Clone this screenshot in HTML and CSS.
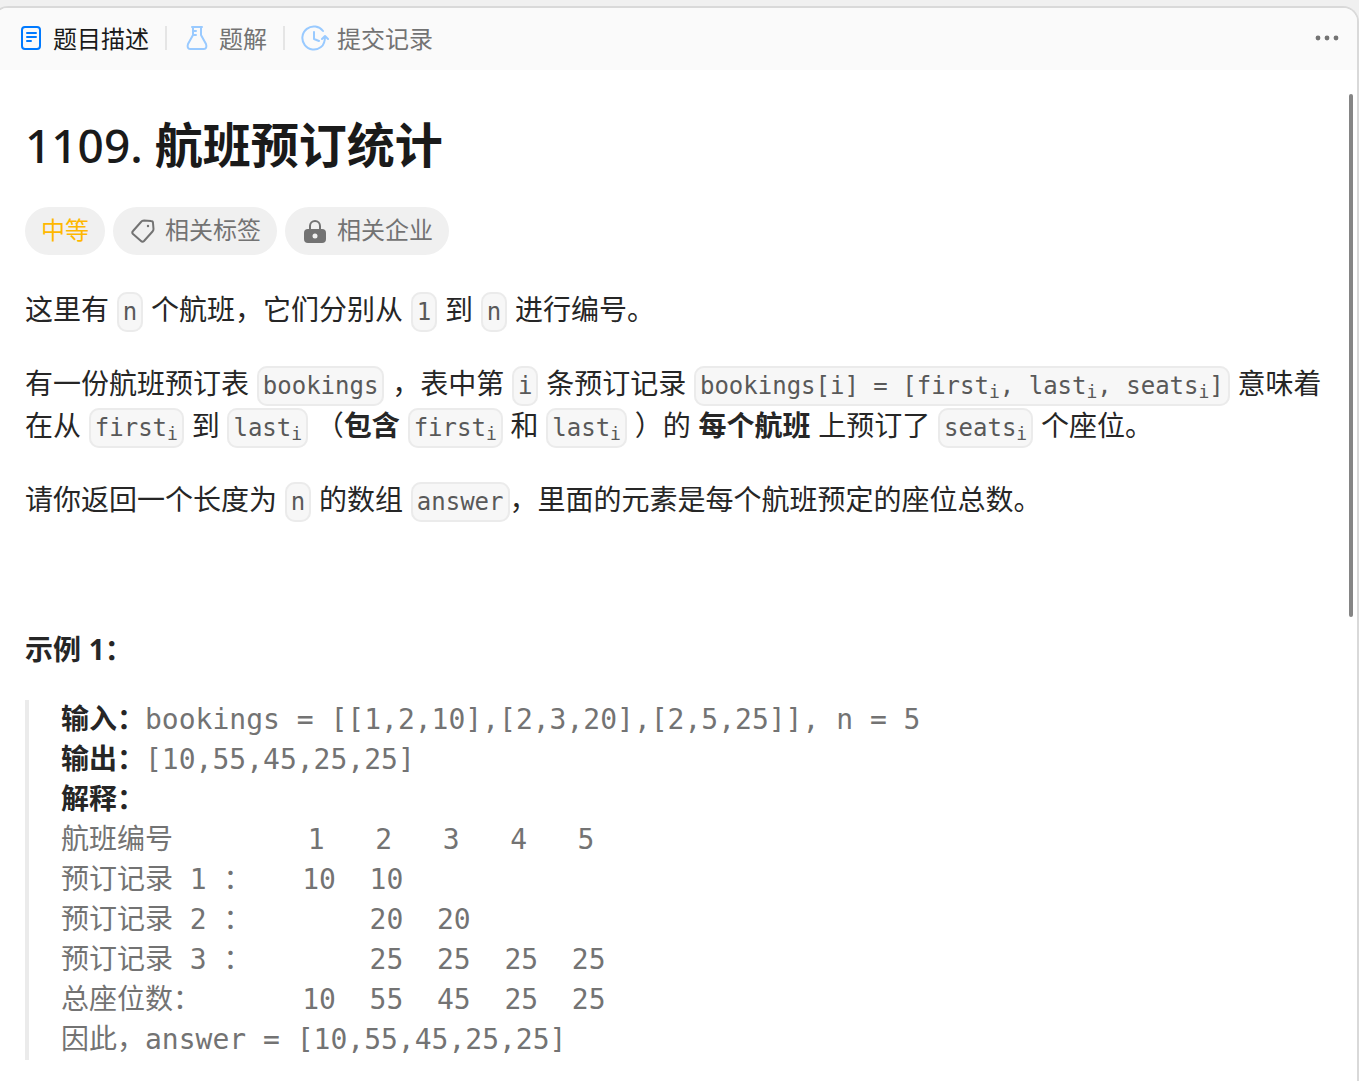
FILE: index.html
```html
<!DOCTYPE html>
<html lang="zh-CN">
<head>
<meta charset="utf-8">
<title>1109. 航班预订统计</title>
<meta name="viewport" content="width=device-width, initial-scale=1">
<link rel="stylesheet" href="styles.css">
</head>
<body>
<main class="panel">
  <header class="bar">
    <nav class="tabs">
      <a class="tab tab-active" href="#description">
        <svg class="icon" viewBox="0 0 28 28" fill="none" stroke="#007aff" stroke-width="2" stroke-linecap="round"><rect x="5" y="3" width="18" height="22" rx="3"/><path d="M10 9h9M10 13h9M10 17h4"/></svg>
        <span class="label">题目描述</span>
      </a>
      <a class="tab" href="#solution">
        <svg class="icon" viewBox="0 0 28 28" fill="none" stroke="#99caff" stroke-width="2" stroke-linecap="round" stroke-linejoin="round"><path d="M9 3h10M10 3v8L5 20c-1 3 0 5 2 5h14c2 0 3-2 2-5l-5-9V3M11 7h2M11 11h2"/></svg>
        <span class="label">题解</span>
      </a>
      <a class="tab" href="#submissions">
        <svg class="icon" viewBox="0 0 28 28" fill="none" stroke="#99caff" stroke-width="2" stroke-linecap="round" stroke-linejoin="round"><path d="M22 7A11.500 11.500 0 1 0 20 23C23 21 24 17 24 12M21 15l3-3 3 3M13 8v7l5 2"/></svg>
        <span class="label">提交记录</span>
      </a>
    </nav>
    <button class="more" type="button" aria-label="更多">
      <svg class="dots" viewBox="0 0 24 8" fill="#737373"><circle cx="3" cy="4" r="2.400"/><circle cx="12" cy="4" r="2.400"/><circle cx="21" cy="4" r="2.400"/></svg>
    </button>
  </header>

  <article class="content" id="description">
    <h1 class="title"><span class="number">1109. </span>航班预订统计</h1>
    <div class="tags">
      <span class="tag tag-medium">中等</span>
      <button class="tag" type="button">
        <svg class="icon" viewBox="0 0 28 28" fill="none" stroke="#737373" stroke-width="2" stroke-linejoin="round"><path d="M15 3.500L22 4q2 0 2 2l.5 6q0 1.500-1 2.500L15 24q-1.500 1.500-3 0l-8-7q-1.500-1.500 0-3l8-9q1-1.500 3-1.500z"/><circle cx="19" cy="9" r="1.200" fill="#737373" stroke="none"/></svg>
        相关标签
      </button>
      <button class="tag" type="button">
        <svg class="icon" viewBox="0 0 28 28"><path d="M9 12V9a5 5 0 0 1 10 0v3" fill="none" stroke="#737373" stroke-width="2"/><rect x="3" y="12" width="22" height="14" rx="4" fill="#737373"/><circle cx="14" cy="19" r="2.500" fill="#f0f0f0"/></svg>
        相关企业
      </button>
    </div>

    <div class="text">
      <p>这里有 <code>n</code> 个航班，它们分别从 <code>1</code> 到 <code>n</code> 进行编号。</p>
      <p>有一份航班预订表 <code>bookings</code> ，表中第 <code>i</code> 条预订记录 <code>bookings[i] = [first<sub>i</sub>, last<sub>i</sub>, seats<sub>i</sub>]</code> 意味着在从 <code>first<sub>i</sub></code> 到 <code>last<sub>i</sub></code> （<strong>包含</strong> <code>first<sub>i</sub></code> 和 <code>last<sub>i</sub></code> ）的 <strong>每个航班</strong> 上预订了 <code>seats<sub>i</sub></code> 个座位。</p>
      <p>请你返回一个长度为 <code>n</code> 的数组 <code>answer</code>，里面的元素是每个航班预定的座位总数。</p>
      <p>&nbsp;</p>
      <p class="example"><strong>示例 <span class="digit">1</span>：</strong></p>
    </div>
<pre class="sample"><strong>输入：</strong>bookings = [[1,2,10],[2,3,20],[2,5,25]], n = 5
<strong>输出：</strong>[10,55,45,25,25]
<strong>解释：</strong>
航班编号        1   2   3   4   5
预订记录 1 ：   10  10
预订记录 2 ：       20  20
预订记录 3 ：       25  25  25  25
总座位数：      10  55  45  25  25
因此，answer = [10,55,45,25,25]
</pre>
  </article>
  <div class="scroll-thumb"></div>
</main>
</body>
</html>
```
FILE: styles.css
```css
* {
  box-sizing: border-box;
}

body {
  margin: 0;
  padding-top: 6px;
  background: #f0f0f0;
  color: #262626;
  font-family: "Liberation Sans", "Noto Sans CJK SC", sans-serif;
  text-spacing-trim: space-all;
  overflow: hidden;
}

.panel {
  position: relative;
  min-height: calc(100vh - 6px);
  margin-left: -8px;
  border: 2px solid #d9d9d9;
  border-bottom: 0;
  border-radius: 16px 16px 0 0;
  background: #fff;
  overflow: hidden;
}

.bar {
  display: flex;
  align-items: center;
  justify-content: space-between;
  height: 62px;
  padding: 0 18px 2px 23px;
  background: #fafafa;
}

.tabs {
  display: flex;
}

.tab {
  display: flex;
  align-items: center;
  gap: 8px;
  color: #737373;
  font-size: 24px;
  line-height: 28px;
  text-decoration: none;
}

.tab + .tab::before {
  content: "";
  width: 2px;
  height: 24px;
  margin: 0 8px 0 16px;
  background: #e5e5e5;
}

.tab-active {
  color: #1a1a1a;
}

.label {
  padding-top: 4px;
}

.icon {
  flex: none;
  width: 28px;
  height: 28px;
}

.more {
  display: flex;
  padding: 0;
  border: 0;
  background: none;
}

.dots {
  width: 24px;
  height: 8px;
}

.content {
  padding: 39px 24px 24px 31px;
}

.title {
  margin: 0;
  color: #1a1a1a;
  font-size: 48px;
  line-height: 72px;
}

.number {
  font-family: "Noto Sans", sans-serif;
  font-size: 46px;
  font-weight: 500;
}

.tags {
  display: flex;
  flex-wrap: wrap;
  gap: 8px;
  margin-top: 24px;
}

.tag {
  display: flex;
  align-items: center;
  gap: 8px;
  height: 48px;
  padding: 0 16px;
  border: 0;
  border-radius: 24px;
  background: #f0f0f0;
  color: #737373;
  font: inherit;
  font-size: 24px;
  line-height: 32px;
}

.tag-medium {
  color: #ffb800;
}

.text {
  margin-top: 35px;
  font-size: 28px;
  line-height: 42px;
}

.text p {
  margin: 0 0 32px;
}

.text .example {
  margin-bottom: 28px;
}

.digit {
  font-family: "Noto Sans", sans-serif;
}

code {
  padding: 4px;
  border: 2px solid #ebebeb;
  border-radius: 10px;
  background: #f7f7f7;
  color: #595959;
  font-family: "DejaVu Sans Mono", monospace;
  font-size: 24px;
  line-height: 24px;
}

sub {
  position: relative;
  bottom: -4px;
  font-size: 18px;
  line-height: 0;
  vertical-align: baseline;
}

.sample {
  margin: 0;
  padding-left: 32px;
  border-left: 4px solid #ebebeb;
  color: #737373;
  font-family: "DejaVu Sans Mono", "Noto Sans CJK SC", monospace;
  font-size: 28px;
  line-height: 40px;
}

.sample strong {
  color: #262626;
}

.scroll-thumb {
  position: absolute;
  top: 86px;
  right: 4px;
  width: 4px;
  height: 523px;
  border-radius: 2px;
  background: #858585;
}
```
